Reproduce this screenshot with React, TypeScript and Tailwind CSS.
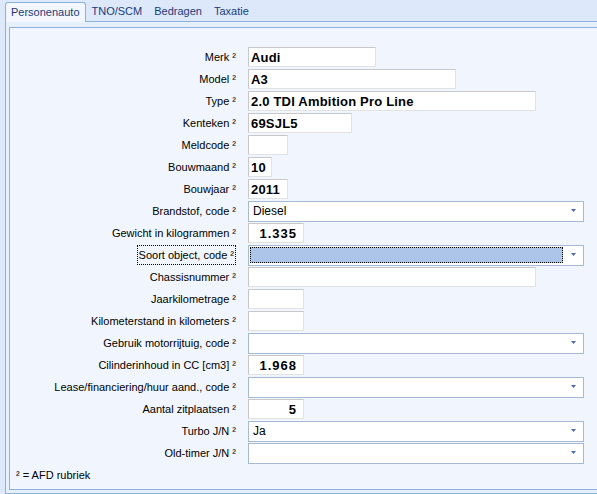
import React from 'react';

type Row = {
    label: string;
    kind: 'text' | 'combo';
    value?: string;
    width?: string;
    right?: boolean;
    focused?: boolean;
};

const rows: Row[] = [
    { label: 'Merk', kind: 'text', value: 'Audi', width: 'w-[128px]' },
    { label: 'Model', kind: 'text', value: 'A3', width: 'w-[208px]' },
    { label: 'Type', kind: 'text', value: '2.0 TDI Ambition Pro Line', width: 'w-[288px]' },
    { label: 'Kenteken', kind: 'text', value: '69SJL5', width: 'w-[104px]' },
    { label: 'Meldcode', kind: 'text', value: '', width: 'w-[40px]' },
    { label: 'Bouwmaand', kind: 'text', value: '10', width: 'w-[24px]' },
    { label: 'Bouwjaar', kind: 'text', value: '2011', width: 'w-[40px]' },
    { label: 'Brandstof, code', kind: 'combo', value: 'Diesel' },
    { label: 'Gewicht in kilogrammen', kind: 'text', value: '1.335', width: 'w-[56px]', right: true },
    { label: 'Soort object, code', kind: 'combo', value: '', focused: true },
    { label: 'Chassisnummer', kind: 'text', value: '', width: 'w-[288px]' },
    { label: 'Jaarkilometrage', kind: 'text', value: '', width: 'w-[56px]' },
    { label: 'Kilometerstand in kilometers', kind: 'text', value: '', width: 'w-[56px]' },
    { label: 'Gebruik motorrijtuig, code', kind: 'combo', value: '' },
    { label: 'Cilinderinhoud in CC [cm3]', kind: 'text', value: '1.968', width: 'w-[56px]', right: true },
    { label: 'Lease/financiering/huur aand., code', kind: 'combo', value: '' },
    { label: 'Aantal zitplaatsen', kind: 'text', value: '5', width: 'w-[56px]', right: true },
    { label: 'Turbo J/N', kind: 'combo', value: 'Ja' },
    { label: 'Old-timer J/N', kind: 'combo', value: '' },
];

const tabs = ['Personenauto', 'TNO/SCM', 'Bedragen', 'Taxatie'];

function Arrow() {
    return (
        <svg width="5" height="4" viewBox="0 0 5 4">
            <polygon points="0,0 5,0 2.5,3" fill="#4a69b5" />
        </svg>
    );
}

function Field({ row }: { row: Row }) {
    if (row.kind === 'combo') {
        return (
            <div className="flex h-[21px] w-[336px] items-center border border-[#a6bad6] bg-white">
                {row.focused ? (
                    <div className="ml-[1px] h-[16px] flex-1 border border-dotted border-black bg-[#aec5ea]" />
                ) : (
                    <div className="flex-1 pl-[4px] text-[12px] leading-none text-black">{row.value}</div>
                )}
                <div className="flex w-[20px] justify-center">
                    <Arrow />
                </div>
            </div>
        );
    }
    return (
        <div
            className={`flex h-[20px] items-center border border-t-[#c8c8c8] border-l-[#c8c8c8] border-r-[#e2e2e2] border-b-[#e2e2e2] bg-white pt-[1px] text-[13px] font-bold leading-none text-black ${row.width} ${row.right ? 'justify-end pr-[6px] tracking-[1px]' : 'pl-[2px] tracking-[0.2px]'}`}
        >
            {row.value}
        </div>
    );
}

export default function App() {
    return (
        <div className="h-[494px] w-[597px] overflow-hidden bg-[#dde9fb] font-['Liberation_Sans',Arial,sans-serif] text-black">
            {/* tabs */}
            <div className="flex h-[21px] items-end pl-[5px]">
                {tabs.map((t, i) =>
                    i === 0 ? (
                        <div
                            key={t}
                            className="relative z-10 -mb-px flex h-[20px] items-center rounded-t-[3px] border border-b-0 border-[#8eb0dc] bg-[#f2f7fe] px-[5px] text-[11px] text-[#1b3a7c]"
                        >
                            {t}
                        </div>
                    ) : (
                        <div key={t} className="flex h-[20px] items-center px-[6px] text-[11px] text-[#1b3a7c]">
                            {t}
                        </div>
                    )
                )}
            </div>

            {/* tab page */}
            <div className="ml-[5px] w-[600px] border border-[#8eb0dc] bg-[#e6effc] pb-[3px] pl-[3px] pt-[5px]">
                <div className="h-[463px] border border-[#8eb0dc] bg-[#f1f6fe] pt-[18px]">
                    {rows.map((row) => (
                        <div key={row.label} className="flex h-[22px] items-center">
                            <div className="w-[226px] text-right text-[11px] leading-none">
                                {row.focused ? (
                                    <span className="border border-dotted border-black px-[1px] py-[3px]">
                                        {row.label} ²
                                    </span>
                                ) : (
                                    <span>{row.label} ²</span>
                                )}
                            </div>
                            <div className="ml-[12px]">
                                <Field row={row} />
                            </div>
                        </div>
                    ))}
                    <div className="flex h-[22px] items-center pl-[6px] text-[11px]">² = AFD rubriek</div>
                </div>
            </div>
        </div>
    );
}
